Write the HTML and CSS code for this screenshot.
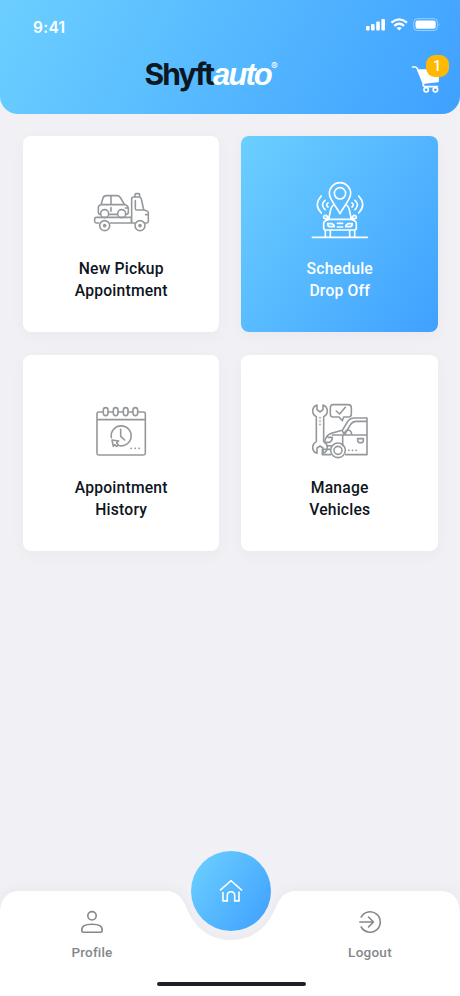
FILE: index.html
```html
<!DOCTYPE html>
<html lang="en">
<head>
<meta charset="utf-8">
<title>Shyftauto</title>
<link rel="stylesheet" href="styles.css">
</head>
<body>
<div class="screen">
  <header class="header">
    <div class="status">
      <span class="time">9:41</span>
      <svg class="status-icons" viewBox="0 0 75 15" fill="#fff">
        <rect x="0" y="9" width="3.6" height="4.6" rx="1"/><rect x="5" y="7" width="3.6" height="6.6" rx="1"/><rect x="10.2" y="4.6" width="3.6" height="9" rx="1"/><rect x="15.4" y="2" width="3.6" height="11.6" rx="1"/>
        <g fill="none" stroke="#fff" stroke-width="2.2"><path d="M25.4 5.7Q33.2-1 41 5.7"/><path d="M28.3 8.8Q33.2 4.7 38.1 8.8"/></g>
        <path d="M30.6 10.9Q33.2 8.9 35.8 10.9L33.2 13.6z"/>
        <rect x="47.8" y="1.7" width="23.6" height="11.8" rx="3.4" fill="none" stroke="#fff" stroke-opacity=".45"/>
        <rect x="49.5" y="3.4" width="20.2" height="8.4" rx="2"/>
        <path d="M72.8 5.8q1.6 1.8 0 3.6z" opacity=".5"/>
      </svg>
    </div>
    <div class="brand-row">
      <div class="logo"><span class="logo-dark">Shyft</span><span class="logo-light">auto</span><span class="logo-mark">®</span></div>
      <div class="cart">
        <svg class="cart-icon" viewBox="0 0 30 30" fill="none" stroke="#fff" stroke-width="1.7" stroke-linecap="round" stroke-linejoin="round">
          <path d="M1.5 3H4.5Q6 3.2 7 6L12.5 20"/>
          <path d="M7 6.2H27V17.5L13 19z" fill="#fff"/>
          <path d="M13 19.2Q11 21.5 13.5 22.6H26.5"/>
          <circle cx="15.2" cy="25.8" r="2.2"/><circle cx="24.4" cy="25.8" r="2.2"/>
        </svg>
        <span class="badge">1</span>
      </div>
    </div>
  </header>

  <main class="grid">
    <section class="card">
      <svg class="card-icon" viewBox="32 6 180 180">
        <path d="M56 129H48Q43 129 43 124V117Q43 112 48 112H153V129H90M153 129H164M194 129H199Q204 129 204 124V98Q204 93 198 92L190 89 183 57Q181 51 175 51H160Q154 51 154 57V129M164 51V44Q164 41 167 41H175Q178 41 178 44V51M188 90H169Q165 90 165 86V62M196 104H203"/>
        <circle cx="73" cy="137" r="15"/><circle cx="179" cy="137" r="15"/><circle cx="73" cy="137" r="3"/><circle cx="179" cy="137" r="3"/>
        <path d="M60 103Q54 103 54 97V83Q54 76 62 74L68 54Q70 47 78 47H111Q117 47 121 54L132 73Q144 77 144 86V97Q144 103 138 103M86 103H111M62 74H132M92 48V74M92 83V94M135 84H143"/>
        <circle cx="73" cy="101" r="12"/><circle cx="124" cy="101" r="12"/>
      </svg>
      <h2 class="card-title">New Pickup<br>Appointment</h2>
    </section>
    <section class="card card-active">
      <svg class="card-icon" viewBox="27 29 180 180">
        <path d="M120 124C107 99 88 82 88 63A32 32 0 0 1 152 63C152 82 133 99 120 124Z"/><circle cx="120" cy="63" r="17"/>
        <path d="M75 84Q60 97 75 112M64 71Q40 97 64 122M84 92Q76 97 84 104M165 84Q180 97 165 112M176 71Q200 97 176 122M156 92Q164 97 156 104"/>
        <path d="M100 98Q94 104 92 112L86 141H154L148 112Q146 104 140 98M86 141Q71 145 71 153V168Q71 173 77 173H163Q169 173 169 168V153Q169 145 154 141M84 139H76Q71 139 71 134 71 129 77 129 82 129 84 139M156 139H164Q169 139 169 134 169 129 163 129 158 129 156 139M76 174V194M91 174V194M149 174V194M164 174V194M37 195H202"/>
        <path d="M83 154H94Q102 155 103 163H90Q83 162 83 154M157 154H146Q138 155 137 163H150Q157 162 157 154M112 153H128M112 164H128"/>
      </svg>
      <h2 class="card-title">Schedule<br>Drop Off</h2>
    </section>
    <section class="card">
      <svg class="card-icon" viewBox="20 17 180 180">
        <path d="M57 50H43Q38 50 38 55V174Q38 179 43 179H178Q183 179 183 174V55Q183 50 178 50H160M71 50H87M101 50H117M131 50H146M38 73H183"/>
        <rect x="57" y="37" width="14" height="24" rx="7"/><rect x="87" y="37" width="14" height="24" rx="7"/><rect x="117" y="37" width="14" height="24" rx="7"/><rect x="146" y="37" width="14" height="24" rx="7"/>
        <path d="M81 127A30 30 0 1 1 101 150M109 102V123L121 134M83 134L103 137 97 142 102 148 97 153 91 148 87 153Z"/>
        <path d="M140 159H141M152 159H153M164 159H165"/>
      </svg>
      <h2 class="card-title">Appointment<br>History</h2>
    </section>
    <section class="card">
      <svg class="card-icon" viewBox="27 17 180 180">
        <path d="M51 29Q38 34 38 47 38 58 49 64V139Q38 145 38 157 39 171 51 174V158L60 152 69 158V174Q81 170 82 157 82 145 71 139V64Q82 58 82 47 82 34 69 29V43L60 50 51 43Z"/>
        <path d="M99 28H145Q154 28 154 37V56Q154 65 145 65H131L127 76 117 65H99Q91 65 91 56V37Q91 28 99 28M109 47L119 56 136 36"/>
        <path d="M201 68H163Q149 68 142 80L127 105 94 114Q75 121 74 143M201 68V178H137M92 178H67V162H89M201 78H168Q158 78 152 87L133 119H201M128 119V151M133 119Q134 104 145 104 155 106 155 119M79 141H86Q96 140 97 126H84M128 108L133 119H97M81 151Q91 151 95 152M173 130H190V136Q190 142 182 142 173 142 173 136Z"/>
        <circle cx="114" cy="165" r="22"/><circle cx="114" cy="165" r="12"/>
        <path d="M60 67V68M60 77V78M60 87V88M146 165H147M157 165H158M168 165H169"/>
      </svg>
      <h2 class="card-title">Manage<br>Vehicles</h2>
    </section>
  </main>

  <nav class="nav">
    <svg class="nav-shape" viewBox="0 0 460 105"><path d="M0 20Q2 0 20 0H166C178 0 183 8 187 18C195 37 210 49 231 49S267 37 275 18C279 8 284 0 296 0H440Q458 0 460 20V105H0Z"/></svg>
    <a class="nav-item">
      <svg class="nav-icon" viewBox="0 0 26 26"><circle cx="13" cy="6.8" r="4.2"/><path d="M2.8 21.7C2.5 17 6 15.2 13 15.2S23.5 17 23.2 21.7Q23.2 23.2 21.7 23.2H4.3Q2.8 23.2 2.8 21.7Z"/></svg>
      <span>Profile</span>
    </a>
    <a class="home">
      <svg class="home-icon" viewBox="0 0 26 26"><path d="M2 12.3L13 2.7 24 12.3M5 14V22.9H9.3V17.5C9.3 12.4 16.7 12.4 16.7 17.5V22.9H21V13.5"/></svg>
    </a>
    <a class="nav-item nav-logout">
      <svg class="nav-icon" viewBox="0 0 26 26"><path d="M4.2 8A10.2 10.2 0 1 1 4.2 18M2.8 13H16.5M11.5 8L16.5 13 11.5 18"/></svg>
      <span>Logout</span>
    </a>
    <div class="home-indicator"></div>
  </nav>
</div>
</body>
</html>
```
FILE: styles.css
```css
* { box-sizing: border-box; }

body {
  margin: 0;
  font-family: Roboto, "Liberation Sans", sans-serif;
  color: #0e1520;
}

.screen {
  display: flex;
  flex-direction: column;
  width: 460px;
  height: 996px;
  overflow: hidden;
  background: #f0f0f5;
}

.header {
  height: 113.5px;
  border-radius: 0 0 18px 18px;
  background: linear-gradient(118deg, #6ccfff 0%, #3fa1ff 100%);
  color: #fff;
}

.status {
  display: flex;
  justify-content: space-between;
  height: 50px;
  padding: 17px 19px 0 33px;
}

.time {
  font: 600 15.5px/21px Inter, sans-serif;
  letter-spacing: .3px;
}

.status-icons { width: 75px; height: 15px; }

.brand-row {
  display: grid;
  grid-template-columns: 1fr auto;
  padding: 4px 16.5px 0 144.5px;
}

.logo {
  display: flex;
  height: 40px;
  font: 700 30px/40px Inter, sans-serif;
}

.logo-dark { color: #0b1722; letter-spacing: -1.9px; }

.logo-light {
  font-family: "Liberation Sans", sans-serif;
  font-style: italic;
  font-size: 31px;
  line-height: 41px;
  letter-spacing: -1.9px;
}

.logo-mark { font-size: 10px; line-height: 25px; font-weight: 400; }

.cart { position: relative; width: 33px; height: 40px; }
.cart-icon { width: 30px; height: 30px; margin-top: 10px; }

.badge {
  position: absolute;
  top: .5px;
  right: -5px;
  width: 22.5px;
  height: 22.5px;
  border-radius: 9px;
  background: #ffb803;
  font-size: 14px;
  font-weight: 500;
  line-height: 23px;
  text-align: center;
}

.grid {
  display: grid;
  grid-template-columns: 1fr 1fr;
  grid-auto-rows: 196.5px;
  gap: 22.4px 22px;
  padding: 22.3px 22.5px;
  flex: 1;
}

.card {
  display: flex;
  flex-direction: column;
  align-items: center;
  gap: 16px;
  padding-top: 46px;
  border-radius: 8px;
  background: #fff;
  box-shadow: 0 4px 16px rgba(20, 20, 60, .035);
}

.card-active {
  background: linear-gradient(125deg, #6ccfff 0%, #3fa1ff 100%);
  color: #fff;
}

.card-icon {
  width: 60px;
  height: 60px;
  overflow: visible;
  fill: none;
  stroke: #95989b;
  stroke-width: 4.8;
  stroke-linecap: round;
  stroke-linejoin: round;
}

.card-active .card-icon { stroke: #fff; stroke-width: 5; }

.card-title {
  margin: 0 0 0 1px;
  font-size: 15.7px;
  font-weight: 500;
  line-height: 22px;
  letter-spacing: .2px;
  text-align: center;
}

.nav {
  position: relative;
  display: grid;
  grid-template-columns: 184px 94px 182px;
  grid-template-rows: 92px 13px;
  height: 105px;
}

.nav-shape {
  position: absolute;
  inset: 0;
  width: 460px;
  height: 105px;
  overflow: visible;
  fill: #fff;
  filter: drop-shadow(0 -2px 6px rgba(20, 20, 60, .035));
}

.nav-item {
  position: relative;
  display: flex;
  flex-direction: column;
  align-items: center;
  gap: 7px;
  padding-top: 18px;
  color: #85888b;
  font-size: 13.5px;
  font-weight: 500;
  line-height: 20px;
  letter-spacing: .15px;
}

.nav-logout { margin-left: 2px; letter-spacing: .25px; }

.nav-icon {
  width: 26px;
  height: 26px;
  fill: none;
  stroke: #85888b;
  stroke-width: 1.6;
  stroke-linecap: round;
  stroke-linejoin: round;
}

.home {
  position: relative;
  display: flex;
  align-items: center;
  justify-content: center;
  justify-self: center;
  width: 80px;
  height: 80px;
  margin-top: -40px;
  border-radius: 50%;
  background: linear-gradient(125deg, #6ccfff 5%, #3fa1ff 95%);
}

.home-icon {
  width: 26px;
  height: 26px;
  fill: none;
  stroke: #fff;
  stroke-width: 1.6;
}

.home-indicator {
  position: relative;
  grid-column: 1 / -1;
  justify-self: center;
  width: 149px;
  height: 3.5px;
  margin-top: -1px;
  margin-left: 2px;
  border-radius: 2px;
  background: #202028;
}
```
